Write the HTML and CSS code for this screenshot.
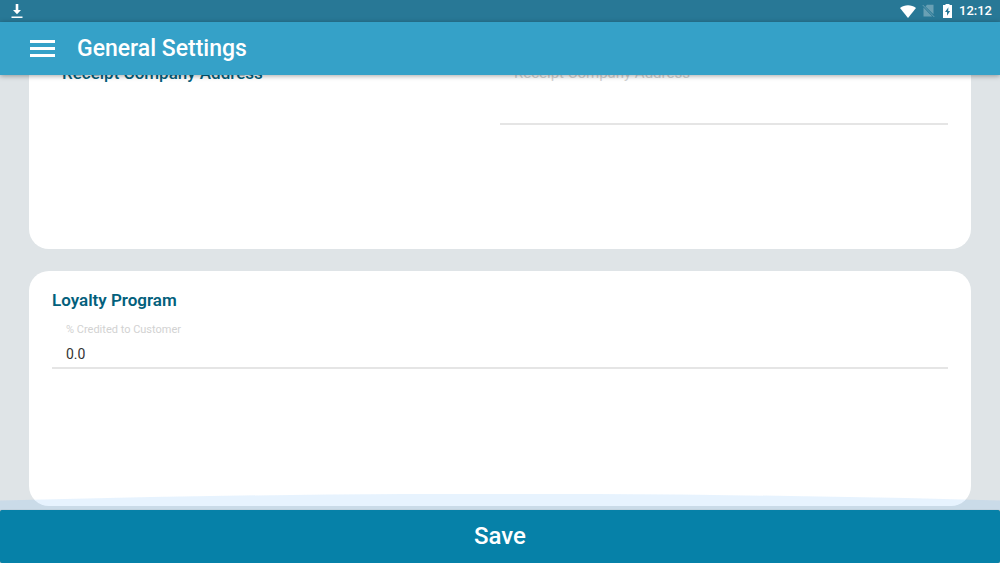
FILE: index.html
```html
<!DOCTYPE html>
<html lang="en">
<head>
<meta charset="utf-8">
<meta name="viewport" content="width=device-width, initial-scale=1">
<title>General Settings</title>
<link rel="stylesheet" href="styles.css">
</head>
<body>
<div class="status-bar">
  <svg class="status-download" viewBox="0 0 12 16" aria-hidden="true"><path d="M4.700 1h2.600v6H10L6 11.300 2 7h2.700zM.5 13.500h11V15H.5z" fill="#fff"/></svg>
  <div class="status-icons">
    <svg class="icon-wifi" viewBox="0 0 16 13" aria-hidden="true"><path d="M0 3C4.500-.6 11.500-.6 16 3L8 13z" fill="#fff"/></svg>
    <svg class="icon-sim" viewBox="0 0 13 14" aria-hidden="true"><path d="M5 .8h6.500v9.400L3.500 2.500zM1.500 3.500 10.200 12.500H1.500z" fill="#69a0b4"/><path d="M.7 1 12.300 13" stroke="#69a0b4" stroke-width="1"/></svg>
    <svg class="icon-battery" viewBox="0 0 9 14" aria-hidden="true"><path d="M2.500 0h4v1H9v13H0V1h2.500z" fill="#fff"/><path d="M5.400 3.200 2 8h2v3.800L7.100 7H5.200z" fill="#287896"/></svg>
    <span class="clock">12:12</span>
  </div>
</div>
<header class="app-bar">
  <button class="menu-button" type="button" aria-label="Menu"><span></span><span></span><span></span></button>
  <h1 class="app-title">General Settings</h1>
</header>
<form class="settings">
  <main class="content">
    <section class="card card-receipt">
      <label class="row-label" for="address">Receipt Company Address</label>
      <textarea class="address" id="address" placeholder="Receipt Company Address"></textarea>
    </section>
    <section class="card card-loyalty">
      <h2 class="card-title">Loyalty Program</h2>
      <div class="field">
        <label class="field-label" for="credited">% Credited to Customer</label>
        <input class="field-input" id="credited" type="text" value="0.0">
      </div>
    </section>
    <svg class="overscroll" viewBox="0 0 1000 16" preserveAspectRatio="none" aria-hidden="true"><path d="M0 6.500Q500-7 1000 6.500V16H0z"/></svg>
  </main>
  <button class="save" type="submit">Save</button>
</form>
</body>
</html>
```
FILE: styles.css
```css
* {
  box-sizing: border-box;
}

body {
  margin: 0;
  height: 100vh;
  display: flex;
  flex-direction: column;
  overflow: hidden;
  background: #dfe4e7;
  font-family: Roboto, "Liberation Sans", sans-serif;
}

h1,
h2 {
  margin: 0;
}

button,
input,
textarea {
  border: 0;
  margin: 0;
  font-family: inherit;
  outline: none;
}

.status-bar {
  flex: none;
  height: 22px;
  padding: 0 8px 0 11px;
  display: flex;
  align-items: center;
  justify-content: space-between;
  background: #287896;
  color: #fff;
}

.status-download {
  width: 12px;
  height: 16px;
}

.status-icons {
  display: flex;
  align-items: center;
}

.icon-wifi {
  width: 16px;
  height: 13px;
}

.icon-sim {
  width: 13px;
  height: 14px;
  margin-left: 6px;
}

.icon-battery {
  width: 9px;
  height: 14px;
  margin-left: 8px;
}

.clock {
  margin-left: 7px;
  font-size: 13px;
  line-height: 24px;
  font-weight: 500;
}

.app-bar {
  flex: none;
  height: 53px;
  padding: 0 30px;
  display: flex;
  align-items: center;
  gap: 22px;
  background: #35a1c8;
  box-shadow: 0 1px 5px rgba(0, 0, 0, 0.35);
  z-index: 1;
}

.menu-button {
  width: 25px;
  padding: 0;
  display: flex;
  flex-direction: column;
  gap: 4px;
  background: none;
}

.menu-button span {
  height: 3px;
  background: #fff;
}

.app-title {
  color: #fff;
  font-size: 23px;
  line-height: 28px;
  font-weight: 500;
}

.settings {
  flex: 1;
  min-height: 0;
  display: flex;
  flex-direction: column;
}

.content {
  position: relative;
  flex: 1;
  min-height: 0;
  overflow: hidden;
  padding: 0 29px 4px;
  display: flex;
  flex-direction: column;
  justify-content: flex-end;
  gap: 22px;
}

.card {
  flex: none;
  padding: 17px 23px;
  border-radius: 20px;
  background: #fff;
}

.card-receipt {
  padding-bottom: 124px;
  display: grid;
  grid-template-columns: 1fr 1fr;
}

.row-label {
  padding: 0 10px;
  color: #03607c;
  font-size: 17px;
  line-height: 24px;
  font-weight: 500;
}

.address {
  width: 100%;
  height: 64px;
  padding: 0 14px;
  border-bottom: 2px solid #e5e5e5;
  background: none;
  color: #333;
  font-size: 15px;
  line-height: 24px;
  resize: none;
}

.address::placeholder,
.field-label {
  color: #d2d2d2;
}

.card-loyalty {
  padding-bottom: 137px;
}

.card-title {
  color: #03607c;
  font-size: 17px;
  line-height: 24px;
  font-weight: 600;
}

.field {
  padding-top: 9px;
  display: flex;
  flex-direction: column;
  border-bottom: 2px solid #e5e5e5;
}

.field-label {
  padding: 0 14px;
  font-size: 11px;
  line-height: 18px;
}

.field-input {
  width: 100%;
  height: 28px;
  padding: 2px 14px 0;
  background: none;
  color: #333;
  font-size: 14px;
}

.overscroll {
  position: absolute;
  left: 0;
  bottom: 0;
  width: 100%;
  height: 16px;
  fill: rgba(33, 150, 243, 0.11);
  pointer-events: none;
}

.save {
  flex: none;
  height: 53px;
  padding: 0 0 2px;
  border-radius: 2px;
  background: #0681a8;
  box-shadow: 0 0 1px rgba(0, 0, 0, 0.4);
  color: #fff;
  font-size: 24px;
  font-weight: 500;
  z-index: 1;
}
```
